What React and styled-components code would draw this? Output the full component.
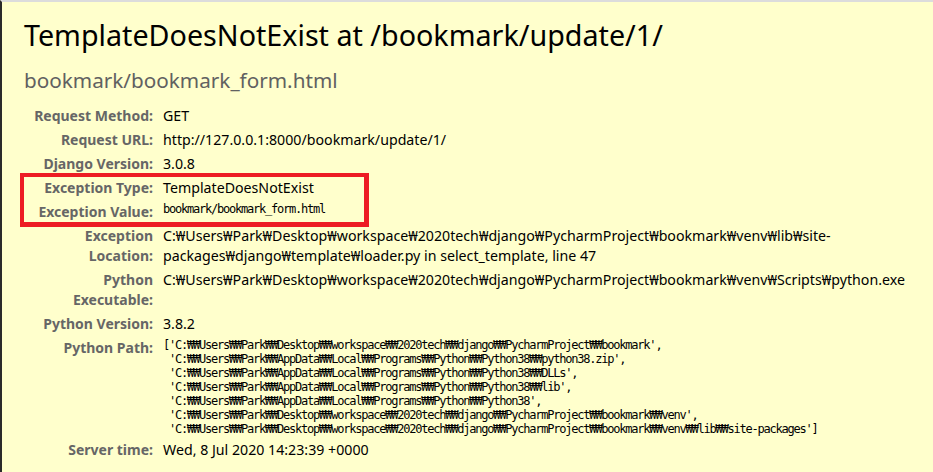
import React from "react";
import styled, { createGlobalStyle } from "styled-components";

const Global = createGlobalStyle`
  html, body { margin: 0; padding: 0; }
  body {
    background: #ffffcc;
    color: #000;
    font-family: "Noto Sans", "Noto Sans CJK KR", sans-serif;
  }
`;

const Summary = styled.section`
  position: relative;
  min-height: 472px;
  box-sizing: border-box;
  background: #ffffcc;
  border-top: 2px solid #dcdcdc;
  border-left: 2px solid #2a2a2a;
  padding: 14px 22px 0 20px;
`;

const Title = styled.h1`
  margin: 0;
  padding-left: 2px;
  font-size: 28.7px;
  line-height: 37px;
  font-weight: 400;
  color: #000;
`;

const Subtitle = styled.h2`
  margin: 13px 0 0;
  padding-left: 2px;
  font-size: 20.7px;
  line-height: 28px;
  font-weight: 400;
  color: #616161;
`;

const Meta = styled.div`
  display: grid;
  grid-template-columns: 131px 1fr;
  column-gap: 10px;
  margin-top: 10px;
`;

const Label = styled.div`
  padding: 2px 0;
  text-align: right;
  font-size: 14px;
  line-height: 20px;
  font-weight: 700;
  color: #666;
`;

const Value = styled.div`
  padding: 2px 0;
  font-size: 14.2px;
  line-height: 20px;
  color: #000;
  min-width: 0;
`;

const Mono = styled.pre`
  margin: 0;
  font-family: "DejaVu Sans Mono", monospace;
  font-size: 12px;
  letter-spacing: -1.22px;
  line-height: 14px;
  color: #000;
  white-space: pre;
`;

const Highlight = styled.div`
  position: absolute;
  left: 18px;
  top: 171px;
  width: 349px;
  height: 54px;
  box-sizing: border-box;
  border: 4px solid #ed1c24;
  border-right-width: 5px;
  border-bottom-width: 5px;
  pointer-events: none;
`;

const W = "\u20A9";
const WW = W + W;

const pythonPath = [
  `['C:${WW}Users${WW}Park${WW}Desktop${WW}workspace${WW}2020tech${WW}django${WW}PycharmProject${WW}bookmark',`,
  ` 'C:${WW}Users${WW}Park${WW}AppData${WW}Local${WW}Programs${WW}Python${WW}Python38${WW}python38.zip',`,
  ` 'C:${WW}Users${WW}Park${WW}AppData${WW}Local${WW}Programs${WW}Python${WW}Python38${WW}DLLs',`,
  ` 'C:${WW}Users${WW}Park${WW}AppData${WW}Local${WW}Programs${WW}Python${WW}Python38${WW}lib',`,
  ` 'C:${WW}Users${WW}Park${WW}AppData${WW}Local${WW}Programs${WW}Python${WW}Python38',`,
  ` 'C:${WW}Users${WW}Park${WW}Desktop${WW}workspace${WW}2020tech${WW}django${WW}PycharmProject${WW}bookmark${WW}venv',`,
  ` 'C:${WW}Users${WW}Park${WW}Desktop${WW}workspace${WW}2020tech${WW}django${WW}PycharmProject${WW}bookmark${WW}venv${WW}lib${WW}site-packages']`,
].join("\n");

const rows = [
  ["Request Method:", "GET"],
  ["Request URL:", "http://127.0.0.1:8000/bookmark/update/1/"],
  ["Django Version:", "3.0.8"],
  ["Exception Type:", "TemplateDoesNotExist"],
  ["Exception Value:", <Mono>bookmark/bookmark_form.html</Mono>],
  [
    "Exception Location:",
    `C:${W}Users${W}Park${W}Desktop${W}workspace${W}2020tech${W}django${W}PycharmProject${W}bookmark${W}venv${W}lib${W}site-packages${W}django${W}template${W}loader.py in select_template, line 47`,
  ],
  [
    "Python Executable:",
    `C:${W}Users${W}Park${W}Desktop${W}workspace${W}2020tech${W}django${W}PycharmProject${W}bookmark${W}venv${W}Scripts${W}python.exe`,
  ],
  ["Python Version:", "3.8.2"],
  ["Python Path:", <Mono>{pythonPath}</Mono>],
  ["Server time:", "Wed, 8 Jul 2020 14:23:39 +0000"],
];

export default function App() {
  return (
    <>
      <Global />
      <Summary>
        <Title>TemplateDoesNotExist at /bookmark/update/1/</Title>
        <Subtitle>bookmark/bookmark_form.html</Subtitle>
        <Meta>
          {rows.map(([label, value]) => (
            <React.Fragment key={label}>
              <Label>{label}</Label>
              <Value>{value}</Value>
            </React.Fragment>
          ))}
        </Meta>
        <Highlight />
      </Summary>
    </>
  );
}
